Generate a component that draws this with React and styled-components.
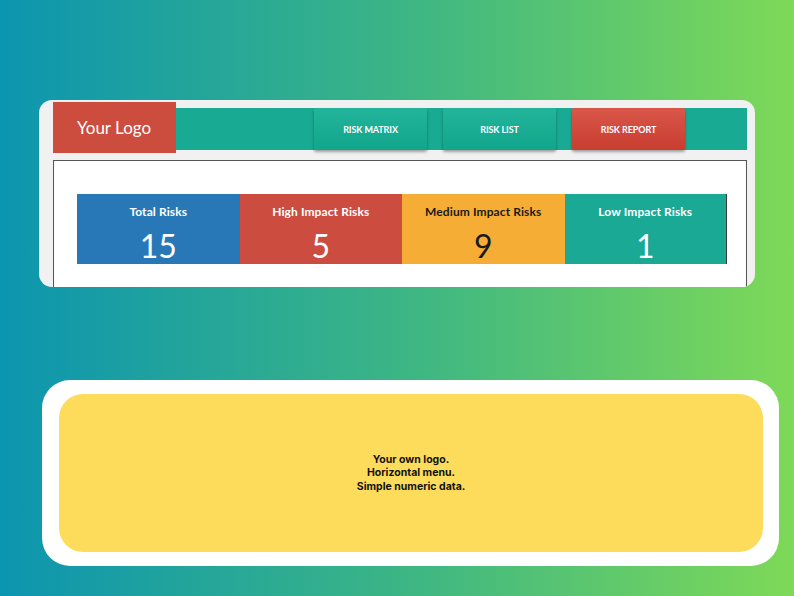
import { createGlobalStyle, styled } from "styled-components";

const Global = createGlobalStyle`
  html, body {
    margin: 0;
    padding: 0;
  }
  body {
    font-family: Lato, "Liberation Sans", sans-serif;
  }
`;

const Page = styled.div`
  width: 794px;
  height: 596px;
  background: linear-gradient(90deg, #0c95b0 0%, #3bb585 50%, #7ed957 100%);
  display: flex;
  flex-direction: column;
  overflow: hidden;
`;

const Dashboard = styled.section`
  margin: 100px 0 0 39px;
  width: 716px;
  height: 187px;
  box-sizing: border-box;
  padding: 2px 8px 0 14px;
  background: #f1f1f1;
  border-radius: 13px;
  overflow: hidden;
  display: flex;
  flex-direction: column;
  gap: 7px;
`;

const NavBar = styled.nav`
  display: flex;
  align-items: center;
  height: 51px;
  background: linear-gradient(180deg, transparent 0 6px, #18aa92 6px 48px, transparent 48px);
`;

const Logo = styled.div`
  width: 123px;
  height: 51px;
  background: #cc4d3e;
  color: #fff;
  font-size: 17px;
  display: flex;
  align-items: center;
  padding-left: 24px;
  box-sizing: border-box;
  margin-right: 138px;
`;

const Menu = styled.div`
  display: flex;
  gap: 16px;
  height: 42px;
  align-self: flex-start;
  margin-top: 6px;
`;

const MenuButton = styled.button`
  width: 113px;
  height: 42px;
  border: none;
  border-radius: 2px;
  color: #fff;
  font-family: Lato, "Liberation Sans", sans-serif;
  font-weight: 700;
  font-size: 9px;
  letter-spacing: -0.1px;
  background: ${(p) =>
    p.$active
      ? "linear-gradient(180deg, #d9574a 0%, #c83d30 100%)"
      : "linear-gradient(180deg, #22b59c 0%, #11a58b 100%)"};
  box-shadow: 0 2px 3px rgba(0, 0, 0, 0.35);
`;

const Panel = styled.div`
  flex: 1;
  background: #fff;
  border: 1px solid #555;
  border-bottom: none;
  padding: 33px 19px 0 23px;
`;

const Tiles = styled.div`
  display: grid;
  grid-template-columns: repeat(4, 1fr);
  height: 70px;
`;

const Tile = styled.div`
  background: ${(p) => p.$bg};
  color: ${(p) => p.$fg || "#fff"};
  display: flex;
  flex-direction: column;
  align-items: center;
  padding-top: 10px;
  box-sizing: border-box;
  border-right: ${(p) => (p.$last ? "1px solid #3a3a3a" : "none")};
`;

const TileLabel = styled.div`
  font-size: 12px;
  font-weight: 700;
  letter-spacing: 0.1px;
`;

const TileValue = styled.div`
  font-size: 32px;
  font-weight: 400;
  line-height: 1;
  margin-top: 11px;
`;

const InfoCard = styled.section`
  margin: 93px 0 0 42px;
  width: 737px;
  height: 186px;
  box-sizing: border-box;
  padding: 14px 16px 14px 17px;
  background: #fff;
  border-radius: 28px;
  display: flex;
`;

const Note = styled.div`
  flex: 1;
  background: #fedc5b;
  border-radius: 24px;
  display: flex;
  align-items: center;
  justify-content: center;
  text-align: center;
  font-family: Inter, "Noto Sans", sans-serif;
  font-weight: 700;
  font-size: 10.5px;
  line-height: 13.5px;
  color: #111;
`;

const tiles = [
  { label: "Total Risks", value: 15, bg: "#2878b8" },
  { label: "High Impact Risks", value: 5, bg: "#cc4d3f" },
  { label: "Medium Impact Risks", value: 9, bg: "#f5ad35", fg: "#1a1a1a" },
  { label: "Low Impact Risks", value: 1, bg: "#19a994" },
];

export default function App() {
  return (
    <>
      <Global />
      <Page>
        <Dashboard>
          <NavBar>
            <Logo>Your Logo</Logo>
            <Menu>
              <MenuButton>RISK MATRIX</MenuButton>
              <MenuButton>RISK LIST</MenuButton>
              <MenuButton $active>RISK REPORT</MenuButton>
            </Menu>
          </NavBar>
          <Panel>
            <Tiles>
              {tiles.map((t, i) => (
                <Tile key={t.label} $bg={t.bg} $fg={t.fg} $last={i === tiles.length - 1}>
                  <TileLabel>{t.label}</TileLabel>
                  <TileValue>{t.value}</TileValue>
                </Tile>
              ))}
            </Tiles>
          </Panel>
        </Dashboard>
        <InfoCard>
          <Note>
            Your own logo.
            <br />
            Horizontal menu.
            <br />
            Simple numeric data.
          </Note>
        </InfoCard>
      </Page>
    </>
  );
}
